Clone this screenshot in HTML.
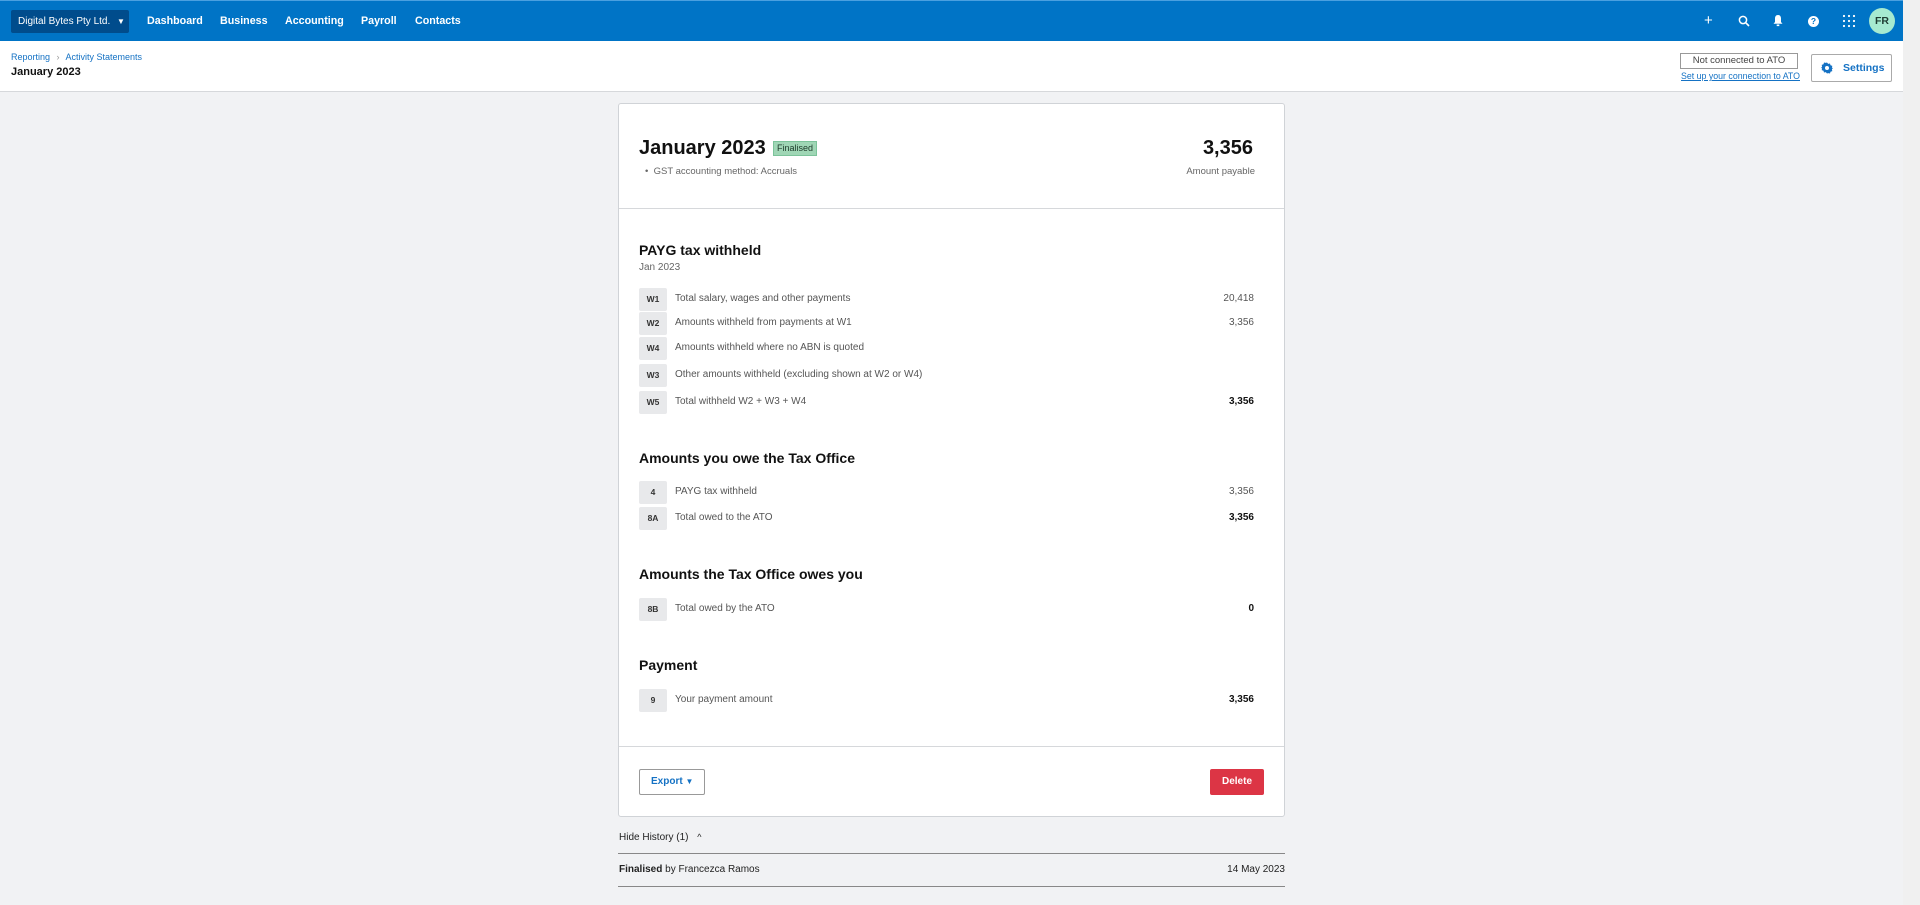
<!DOCTYPE html>
<html><head><meta charset="utf-8"><style>
*{box-sizing:border-box;margin:0;padding:0}
body{width:1920px;height:905px;overflow:hidden;background:#f1f2f4;font-family:"Liberation Sans",Arial,sans-serif;position:relative;color:#111}
.a{position:absolute;white-space:nowrap}
.nav{position:absolute;left:0;top:0;width:1903px;height:41px;background:#0074c6;border-top:1px solid #4aa0e0}
.nl{position:absolute;top:14px;color:#fff;font-weight:bold;font-size:10.7px}
.hdr{position:absolute;left:0;top:41px;width:1903px;height:51px;background:#fff;border-bottom:1px solid #d6d8db}
.sb{position:absolute;left:1903px;top:0;width:17px;height:905px;background:#f0f0f0}
.card{position:absolute;left:618px;top:103px;width:667px;height:714px;background:#fff;border:1px solid #d0d3d7;border-radius:3px}
.box{position:absolute;left:639px;width:28px;height:23px;background:#e8e9eb;border-radius:2px;font-size:8.5px;font-weight:bold;color:#333;text-align:center;line-height:23px}
.lbl{position:absolute;left:675px;font-size:10px;color:#555}
.val{position:absolute;right:666px;font-size:10px;color:#555}
.h2{position:absolute;left:639px;font-size:14px;font-weight:bold;color:#111}
</style></head><body>
<div class="nav">
 <div class="a" style="left:11px;top:9px;width:118px;height:23px;background:#004c8c;border-radius:2px;color:#fff;font-size:10px;line-height:23px;padding-left:7px">Digital Bytes Pty Ltd. <span style="font-size:8px;margin-left:4px">▼</span></div>
 <div class="nl" style="left:147px">Dashboard</div>
 <div class="nl" style="left:220px">Business</div>
 <div class="nl" style="left:285px">Accounting</div>
 <div class="nl" style="left:361px">Payroll</div>
 <div class="nl" style="left:415px">Contacts</div>
 <div class="a" style="left:1704px;top:11px;color:#fff;font-size:15px">+</div>
 <svg class="a" style="left:1738px;top:14px" width="12" height="12" viewBox="0 0 12 12"><circle cx="5" cy="5" r="3.6" fill="none" stroke="#fff" stroke-width="1.5"/><path d="M7.6 7.6L11 11" stroke="#fff" stroke-width="1.6"/></svg>
 <svg class="a" style="left:1772px;top:13px" width="12" height="13" viewBox="0 0 12 13"><path d="M6 1C3.8 1 3 2.8 3 4.5V8L1.5 9.7h9L9 8V4.5C9 2.8 8.2 1 6 1z" fill="#fff"/><rect x="4.7" y="10.5" width="2.6" height="1.6" fill="#fff"/></svg>
 <div class="a" style="left:1808px;top:15px;width:11px;height:11px;border-radius:50%;background:#fff;color:#0074c6;font-size:8.5px;font-weight:bold;text-align:center;line-height:11px">?</div>
 <svg class="a" style="left:1842px;top:13px" width="14" height="14" viewBox="0 0 14 14" fill="#fff"><circle cx="2" cy="2" r="1.1"/><circle cx="7" cy="2" r="1.1"/><circle cx="12" cy="2" r="1.1"/><circle cx="2" cy="7" r="1.1"/><circle cx="7" cy="7" r="1.1"/><circle cx="12" cy="7" r="1.1"/><circle cx="2" cy="12" r="1.1"/><circle cx="7" cy="12" r="1.1"/><circle cx="12" cy="12" r="1.1"/></svg>
 <div class="a" style="left:1869px;top:7px;width:26px;height:26px;border-radius:50%;background:#a6ead0;color:#1f3d33;font-size:10.5px;font-weight:bold;text-align:center;line-height:26px">FR</div>
</div>
<div class="hdr">
 <div class="a" style="left:11px;top:11px;font-size:9px;color:#1572c4">Reporting <span style="color:#999;margin:0 4px">›</span> Activity Statements</div>
 <div class="a" style="left:11px;top:25px;font-size:11px;font-weight:bold">January 2023</div>
 <div class="a" style="left:1680px;top:12px;width:118px;height:16px;border:1px solid #999;font-size:9.5px;color:#444;text-align:center;line-height:14px">Not connected to ATO</div>
 <div class="a" style="left:1681px;top:30px;font-size:8.8px;color:#1572c4;text-decoration:underline">Set up your connection to ATO</div>
 <div class="a" style="left:1811px;top:13px;width:81px;height:28px;border:1px solid #aaa;border-radius:2px;font-size:10.5px;font-weight:bold;color:#1572c4;line-height:26px;padding-left:31px">Settings</div>
 <svg class="a" style="left:1821px;top:21px" width="12" height="12" viewBox="0 0 12 12"><path d="M6 0.5l1.2 1.4 1.8-.4.5 1.8 1.8.6-.4 1.8L12 6l-1.1 1.3.4 1.8-1.8.6-.5 1.8-1.8-.4L6 11.5 4.8 10.1l-1.8.4-.5-1.8-1.8-.6.4-1.8L0 6l1.1-1.3-.4-1.8 1.8-.6.5-1.8 1.8.4z" fill="#1572c4"/><circle cx="6" cy="6" r="2" fill="#fff"/></svg>
</div>
<div class="sb"></div>
<div class="card">
 <div style="position:absolute;left:0;top:104px;width:100%;border-top:1px solid #d6d8db"></div>
 <div style="position:absolute;left:0;top:642px;width:100%;border-top:1px solid #d6d8db"></div>
</div>
<div class="a" style="left:639px;top:137px;font-size:20px;font-weight:bold">January 2023</div>
<div class="a" style="left:773px;top:141px;width:44px;height:15px;background:#9fd6b5;border:1px solid #7cc39a;font-size:9px;color:#1d3a2a;text-align:center;line-height:13px">Finalised</div>
<div class="a" style="left:645px;top:166px;font-size:9.5px;color:#666">•&nbsp; GST accounting method: Accruals</div>
<div class="a" style="right:667px;top:137px;font-size:20px;font-weight:bold">3,356</div>
<div class="a" style="right:665px;top:166px;font-size:9.5px;color:#666">Amount payable</div>

<div class="h2" style="top:242px">PAYG tax withheld</div>
<div class="a" style="left:639px;top:262px;font-size:10px;color:#666">Jan 2023</div>
<div class="box" style="top:288px">W1</div><div class="lbl" style="top:293px">Total salary, wages and other payments</div><div class="val" style="top:293px">20,418</div>
<div class="box" style="top:312px">W2</div><div class="lbl" style="top:317px">Amounts withheld from payments at W1</div><div class="val" style="top:317px">3,356</div>
<div class="box" style="top:337px">W4</div><div class="lbl" style="top:342px">Amounts withheld where no ABN is quoted</div>
<div class="box" style="top:364px">W3</div><div class="lbl" style="top:369px">Other amounts withheld (excluding shown at W2 or W4)</div>
<div class="box" style="top:391px">W5</div><div class="lbl" style="top:396px">Total withheld W2 + W3 + W4</div><div class="val" style="top:396px;font-weight:bold;color:#111">3,356</div>

<div class="h2" style="top:450px">Amounts you owe the Tax Office</div>
<div class="box" style="top:481px">4</div><div class="lbl" style="top:486px">PAYG tax withheld</div><div class="val" style="top:486px">3,356</div>
<div class="box" style="top:507px">8A</div><div class="lbl" style="top:512px">Total owed to the ATO</div><div class="val" style="top:512px;font-weight:bold;color:#111">3,356</div>

<div class="h2" style="top:566px">Amounts the Tax Office owes you</div>
<div class="box" style="top:598px">8B</div><div class="lbl" style="top:603px">Total owed by the ATO</div><div class="val" style="top:603px;font-weight:bold;color:#111">0</div>

<div class="h2" style="top:657px">Payment</div>
<div class="box" style="top:689px">9</div><div class="lbl" style="top:694px">Your payment amount</div><div class="val" style="top:694px;font-weight:bold;color:#111">3,356</div>

<div class="a" style="left:639px;top:769px;width:66px;height:26px;border:1px solid #999;border-radius:2px;font-size:10px;font-weight:bold;color:#1572c4;line-height:24px;padding-left:11px">Export <span style="font-size:8px">▼</span></div>
<div class="a" style="left:1210px;top:769px;width:54px;height:26px;background:#dc3545;border-radius:2px;font-size:10px;font-weight:bold;color:#fff;text-align:center;line-height:26px">Delete</div>

<div class="a" style="left:619px;top:832px;font-size:10px;color:#222">Hide History (1) <span style="margin-left:6px;font-size:9px">^</span></div>
<div class="a" style="left:618px;top:853px;width:667px;border-top:1px solid #888"></div>
<div class="a" style="left:619px;top:864px;font-size:10px;color:#222"><b>Finalised</b> by Francezca Ramos</div>
<div class="a" style="right:635px;top:864px;font-size:10px;color:#222">14 May 2023</div>
<div class="a" style="left:618px;top:886px;width:667px;border-top:1px solid #888"></div>
</body></html>
